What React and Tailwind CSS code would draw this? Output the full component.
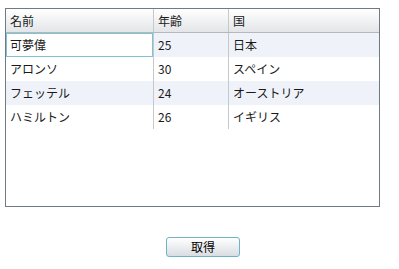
const COLS = ['名前', '年齢', '国'];

const ROWS = [
  { name: '可夢偉', age: 25, country: '日本' },
  { name: 'アロンソ', age: 30, country: 'スペイン' },
  { name: 'フェッテル', age: 24, country: 'オーストリア' },
  { name: 'ハミルトン', age: 26, country: 'イギリス' },
];

const font = 'font-["Noto_Sans_CJK_JP","Noto_Sans",sans-serif]';

export default function App() {
  return (
    <div className={`w-[399px] h-[269px] bg-white pt-[8px] pl-[5px] text-[12px] text-[#1a1a1a] ${font}`}>
      {/* Grid */}
      <div className="w-[375px] h-[199px] border border-[#6d7b85] bg-white">
        {/* Header */}
        <div className="flex h-[24px] bg-gradient-to-b from-white to-[#e3e5e8] border-b border-[#b4b8bc]">
          <div className="w-[148px] pl-[4px] flex items-center border-r border-[#c6c9cc]">{COLS[0]}</div>
          <div className="w-[75px] pl-[4px] flex items-center border-r border-[#c6c9cc]">{COLS[1]}</div>
          <div className="flex-1 pl-[4px] flex items-center">{COLS[2]}</div>
        </div>

        {/* Rows */}
        {ROWS.map((r, i) => (
          <div
            key={r.name}
            className={`flex h-[24px] ${i % 2 === 0 ? 'bg-[#eff3f9]' : 'bg-white'}`}
          >
            <div className="w-[148px] flex border-r border-[#c6c9cc]">
              <div
                className={`flex-1 pl-[4px] flex items-center ${
                  i === 0 ? 'bg-white shadow-[inset_0_0_0_1px_#7cc3d3]' : ''
                }`}
              >
                {r.name}
              </div>
            </div>
            <div className="w-[75px] pl-[4px] flex items-center border-r border-[#c6c9cc]">{r.age}</div>
            <div className="flex-1 pl-[4px] flex items-center">{r.country}</div>
          </div>
        ))}
      </div>

      {/* Button */}
      <button
        type="button"
        className="mt-[30px] ml-[161px] w-[74px] h-[20px] rounded-[3px] border border-[#6fb3c7] bg-gradient-to-b from-white to-[#d9dde2] flex items-center justify-center text-[12px] text-black"
      >
        取得
      </button>
    </div>
  );
}
